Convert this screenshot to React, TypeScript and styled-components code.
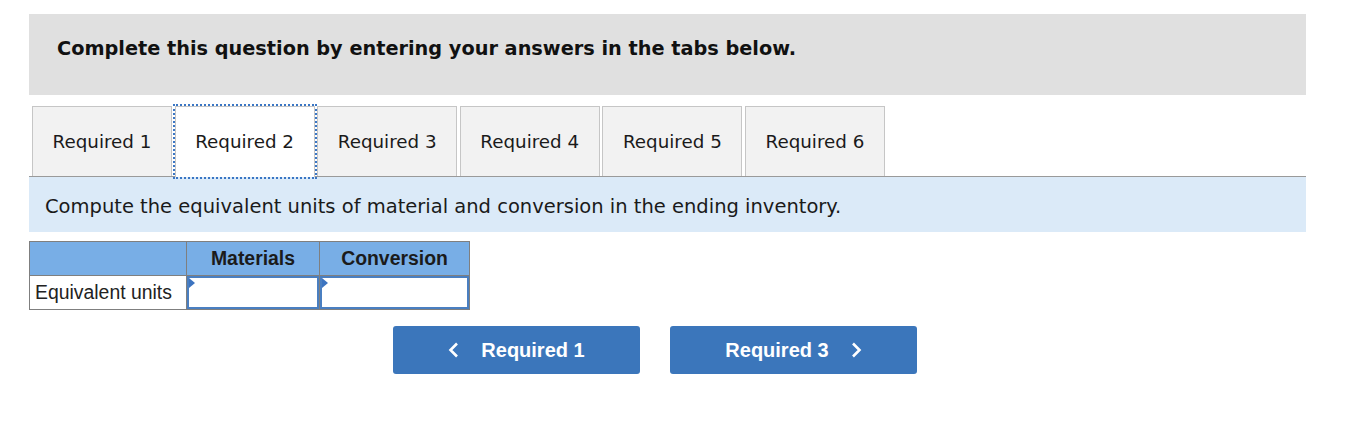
import styled, { createGlobalStyle } from 'styled-components';

const Global = createGlobalStyle`
    body {
        margin: 0;
        background: #ffffff;
        font-family: "DejaVu Sans", Verdana, sans-serif;
    }
`;

const Page = styled.div`
    width: 1277px;
    padding: 14px 0 0 29px;
`;

const Banner = styled.div`
    box-sizing: border-box;
    height: 81px;
    background: #e0e0e0;
    padding: 23px 0 0 28px;
    line-height: 1.2;
    font-weight: bold;
    font-size: 19.3px;
    color: #111;
`;

const TabBar = styled.div`
    display: flex;
    gap: 2.6px;
    margin-top: 11px;
    padding-left: 3px;
    border-bottom: 1px solid #9a9a9a;
    height: 70px;
`;

const Tab = styled.div<{ $active?: boolean }>`
    box-sizing: border-box;
    width: 140px;
    height: 70px;
    display: flex;
    align-items: center;
    justify-content: center;
    font-size: 18.3px;
    color: #1a1a1a;
    background: ${p => (p.$active ? '#ffffff' : '#f2f2f2')};
    border: 1px solid #c6c6c6;
    border-bottom: none;
    ${p => p.$active && `
        height: 71px;
        margin-bottom: -1px;
        padding-bottom: 1px;
        outline: 2px dotted #3a76c4;
        outline-offset: 0px;
    `}
`;

const Instruction = styled.div`
    height: 55px;
    background: #dbeaf8;
    display: flex;
    align-items: center;
    padding: 3px 0 0 16px;
    box-sizing: border-box;
    font-size: 19.5px;
    color: #1a1a1a;
`;

const Table = styled.table`
    margin-top: 9px;
    border-collapse: collapse;
    table-layout: fixed;
    width: 440px;
    font-family: "Liberation Sans", Arial, sans-serif;
    font-size: 19.4px;
`;

const HeadCell = styled.th`
    height: 33px;
    background: #78aee6;
    border: 1px solid #7f7f7f;
    font-weight: bold;
    color: #1b1b1b;
    padding: 0;
    text-align: center;
`;

const LabelCell = styled.td`
    height: 32px;
    border: 1px solid #7f7f7f;
    border-right: none;
    padding: 0 0 0 5px;
    color: #222;
    white-space: nowrap;
`;

const InputCell = styled.td`
    border: 1px solid #7f7f7f;
    padding: 0;
`;

const Field = styled.div`
    box-sizing: border-box;
    height: 33px;
    border: 2px solid #4a7fc1;
    background: #fff;
    position: relative;
    &::before {
        content: '';
        position: absolute;
        left: 0;
        top: 0;
        border-top: 5px solid transparent;
        border-bottom: 5px solid transparent;
        border-left: 6px solid #3c74c0;
    }
`;

const Nav = styled.div`
    display: flex;
    gap: 30px;
    margin: 16px 0 0 364px;
`;

const NavButton = styled.div`
    width: 247px;
    height: 48px;
    border-radius: 3px;
    background: #3b76bb;
    color: #ffffff;
    display: flex;
    align-items: center;
    justify-content: center;
    gap: 22px;
    font-family: "Liberation Sans", Arial, sans-serif;
    font-weight: bold;
    font-size: 20px;
`;

const Chevron = ({ dir }: { dir: 'left' | 'right' }) => (
    <svg width="11" height="16" viewBox="0 0 11 16">
        <path
            d={dir === 'left' ? 'M9 1.5 L2.5 8 L9 14.5' : 'M2 1.5 L8.5 8 L2 14.5'}
            fill="none"
            stroke="#ffffff"
            strokeWidth="2.6"
        />
    </svg>
);

const tabs = [1, 2, 3, 4, 5, 6];

export default function App() {
    return (
        <>
            <Global />
            <Page>
                <Banner>Complete this question by entering your answers in the tabs below.</Banner>
                <TabBar>
                    {tabs.map(n => (
                        <Tab key={n} $active={n === 2}>Required {n}</Tab>
                    ))}
                </TabBar>
                <Instruction>Compute the equivalent units of material and conversion in the ending inventory.</Instruction>
                <Table>
                    <colgroup>
                        <col style={{ width: 157 }} />
                        <col style={{ width: 133 }} />
                        <col style={{ width: 150 }} />
                    </colgroup>
                    <thead>
                        <tr>
                            <HeadCell />
                            <HeadCell>Materials</HeadCell>
                            <HeadCell>Conversion</HeadCell>
                        </tr>
                    </thead>
                    <tbody>
                        <tr>
                            <LabelCell>Equivalent units</LabelCell>
                            <InputCell><Field /></InputCell>
                            <InputCell><Field /></InputCell>
                        </tr>
                    </tbody>
                </Table>
                <Nav>
                    <NavButton><Chevron dir="left" />Required 1</NavButton>
                    <NavButton>Required 3<Chevron dir="right" /></NavButton>
                </Nav>
            </Page>
        </>
    );
}
